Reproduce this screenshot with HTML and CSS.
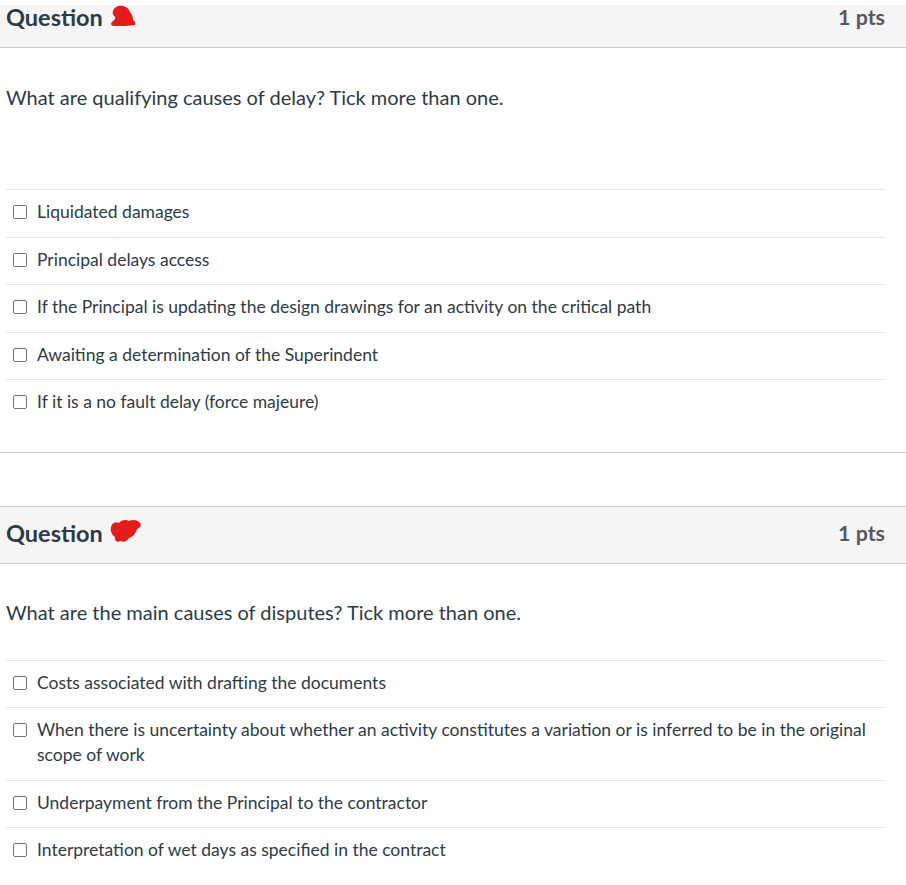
FILE: index.html
```html
<!DOCTYPE html>
<html>
<head>
<meta charset="utf-8">
<link rel="stylesheet" href="styles.css">
</head>
<body>
<div class="question">
  <div class="qheader qheader--cut">
    <span class="qname">Question <svg class="redact" width="28" height="22" viewBox="0 0 28 22"><path d="M4 6 C5 2 10 0 14 1 C18 2 20 4 21 7 C23 9 24 12 24 15 C26 16 27 18 26 20 C20 21 12 21 6 21 C2 21 1 19 3 17 C5 15 7 14 6 12 C4 10 3 8 4 6 Z" fill="#e31b1b"/></svg></span>
    <span class="pts">1 pts</span>
  </div>
  <div class="qbody">
    <div class="qtext qtext--tall">What are qualifying causes of delay? Tick more than one.</div>
    <div class="answers">
      <label class="answer"><span class="box"></span><span class="atext">Liquidated damages</span></label>
      <label class="answer"><span class="box"></span><span class="atext">Principal delays access</span></label>
      <label class="answer"><span class="box"></span><span class="atext">If the Principal is updating the design drawings for an activity on the critical path</span></label>
      <label class="answer"><span class="box"></span><span class="atext">Awaiting a determination of the Superindent</span></label>
      <label class="answer"><span class="box"></span><span class="atext">If it is a no fault delay (force majeure)</span></label>
    </div>
  </div>
</div>

<div class="question question--second">
  <div class="qheader">
    <span class="qname">Question <svg class="redact" width="33" height="25" viewBox="0 0 33 25"><path d="M2 8 C3 4 7 2 10 4 C12 1 17 0 20 2 C24 0 29 1 31 4 C33 6 31 9 28 10 C27 14 24 18 20 19 C18 22 15 24 12 22 C9 24 5 22 6 18 C3 16 1 12 2 8 Z" fill="#e31b1b"/></svg></span>
    <span class="pts">1 pts</span>
  </div>
  <div class="qbody">
    <div class="qtext qtext--second">What are the main causes of disputes? Tick more than one.</div>
    <div class="answers">
      <label class="answer"><span class="box"></span><span class="atext">Costs associated with drafting the documents</span></label>
      <label class="answer"><span class="box"></span><span class="atext">When there is uncertainty about whether an activity constitutes a variation or is inferred to be in the original scope of work</span></label>
      <label class="answer"><span class="box"></span><span class="atext">Underpayment from the Principal to the contractor</span></label>
      <label class="answer"><span class="box"></span><span class="atext">Interpretation of wet days as specified in the contract</span></label>
    </div>
  </div>
</div>
</body>
</html>
```
FILE: styles.css
```css
html, body {
  margin: 0;
  padding: 0;
  background: #ffffff;
}
body {
  padding-top: 5px;
  font-family: Lato, "Noto Sans", sans-serif;
  color: #2d3b45;
}
.question {
  border-bottom: 1px solid #c7cdd1;
  padding-bottom: 25px;
}
.question--second {
  margin-top: 53px;
  border-top: 1px solid #c7cdd1;
  border-bottom: none;
}
.qheader {
  display: flex;
  justify-content: space-between;
  align-items: center;
  height: 57px;
  box-sizing: border-box;
  padding: 0 21px 3px 6px;
  background: #f5f5f5;
  border-bottom: 1px solid #c7cdd1;
}
.qheader--cut {
  height: 43px;
  padding-bottom: 18px;
}
.qname {
  display: flex;
  align-items: center;
  font-size: 23.5px;
  font-weight: 700;
  color: #2d3b45;
}
.redact {
  margin-left: 6px;
  margin-top: -3px;
}
.pts {
  font-size: 21.4px;
  font-weight: 700;
  color: #555a5e;
}
.qbody {
  padding: 0 21px 0 6px;
}
.qtext {
  font-size: 20px;
  line-height: 25px;
  padding-top: 37px;
  padding-bottom: 35px;
  color: #2d3b45;
}
.qtext--tall {
  padding-bottom: 79px;
}
.qtext--second {
  padding-top: 36.5px;
  padding-bottom: 34.5px;
}
.answers {
  display: flex;
  flex-direction: column;
}
.answer {
  display: flex;
  align-items: flex-start;
  border-top: 1px solid #e2e5e7;
  padding: 9px 0 12.5px;
  font-size: 17.5px;
  line-height: 25px;
  color: #2d3b45;
}
.box {
  flex: none;
  width: 12px;
  height: 12px;
  margin: 6px 10px 0 7px;
  border: 1px solid #6b7780;
  border-radius: 2px;
  background: #fff;
}
.atext {
  flex: 1;
}
```
